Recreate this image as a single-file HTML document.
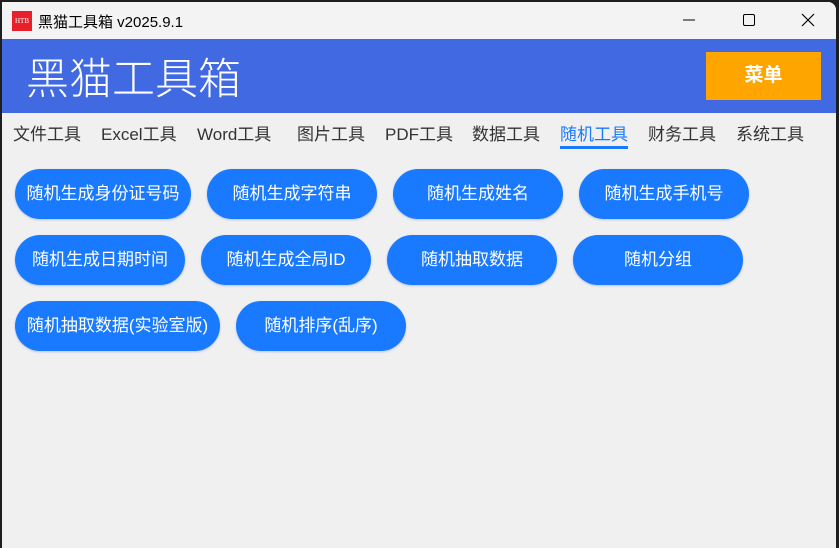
<!DOCTYPE html><html><head><meta charset="utf-8"><style>
*{margin:0;padding:0;box-sizing:border-box}
body{width:839px;height:548px;background:#1e1e1e;position:relative;overflow:hidden;font-family:"Liberation Sans","Microsoft YaHei","Noto Sans CJK SC",sans-serif}
.win{position:absolute;left:2px;top:2px;width:834px;height:546px;background:#f0f0f0;border-top-right-radius:8px;overflow:hidden}
.tb{position:absolute;left:0;top:0;width:100%;height:37px;background:#f3f3f3}
.ico{position:absolute;left:10px;top:9px;width:20px;height:20px;background:#e8202a;color:#fff;font-size:7px;font-family:"Liberation Serif",serif;text-align:center;line-height:20px}
.tt{position:absolute;left:36px;top:9px;font-size:15px;color:#000}
.hd{position:absolute;left:0;top:37px;width:100%;height:74px;background:#4169e1}
.big{position:absolute;left:24px;top:12px;font-size:43px;color:#fff;font-family:"Noto Sans CJK SC",sans-serif;font-weight:300;line-height:50px}
.menu{position:absolute;left:704px;top:13px;width:115px;height:48px;background:#ffa500;color:#fff;font-weight:bold;font-size:19px;text-align:center;line-height:48px}
.tab{position:absolute;top:118px;font-size:17px;color:#333}
.tab.a{color:#1a7aff}
.ul{position:absolute;left:558px;top:144px;width:68px;height:3px;background:#1a7aff}
.b{position:absolute;height:50px;border-radius:25px;background:#1a7aff;color:#fff;font-size:17px;text-align:center;line-height:50px;box-shadow:0 1px 2px rgba(80,120,220,.35)}
.ctl{position:absolute;top:10px}
</style></head><body><div class="win">
<div class="tb"><div class="ico">HTB</div><div class="tt">黑猫工具箱 v2025.9.1</div>
<svg class="ctl" style="left:680px" width="14" height="16"><path d="M1 8H13" stroke="#000" stroke-width="1"/></svg>
<svg class="ctl" style="left:740px" width="14" height="16"><rect x="1.5" y="2.5" width="11" height="11" rx="1.5" fill="none" stroke="#000"/></svg>
<svg class="ctl" style="left:798px" width="16" height="16"><path d="M2 2L14 14M14 2L2 14" stroke="#000" stroke-width="1.2"/></svg>
</div>
<div class="hd"><div class="big">黑猫工具箱</div><div class="menu">菜单</div></div>
<div class="tab" style="left:11px">文件工具</div>
<div class="tab" style="left:99px">Excel工具</div>
<div class="tab" style="left:195px">Word工具</div>
<div class="tab" style="left:295px">图片工具</div>
<div class="tab" style="left:383px">PDF工具</div>
<div class="tab" style="left:470px">数据工具</div>
<div class="tab a" style="left:558px">随机工具</div>
<div class="tab" style="left:646px">财务工具</div>
<div class="tab" style="left:734px">系统工具</div>
<div class="ul"></div>
<div class="b" style="left:13px;top:167px;width:176px">随机生成身份证号码</div>
<div class="b" style="left:205px;top:167px;width:170px">随机生成字符串</div>
<div class="b" style="left:391px;top:167px;width:170px">随机生成姓名</div>
<div class="b" style="left:577px;top:167px;width:170px">随机生成手机号</div>
<div class="b" style="left:13px;top:233px;width:170px">随机生成日期时间</div>
<div class="b" style="left:199px;top:233px;width:170px">随机生成全局ID</div>
<div class="b" style="left:385px;top:233px;width:170px">随机抽取数据</div>
<div class="b" style="left:571px;top:233px;width:170px">随机分组</div>
<div class="b" style="left:13px;top:299px;width:205px">随机抽取数据(实验室版)</div>
<div class="b" style="left:234px;top:299px;width:170px">随机排序(乱序)</div>
</div></body></html>
